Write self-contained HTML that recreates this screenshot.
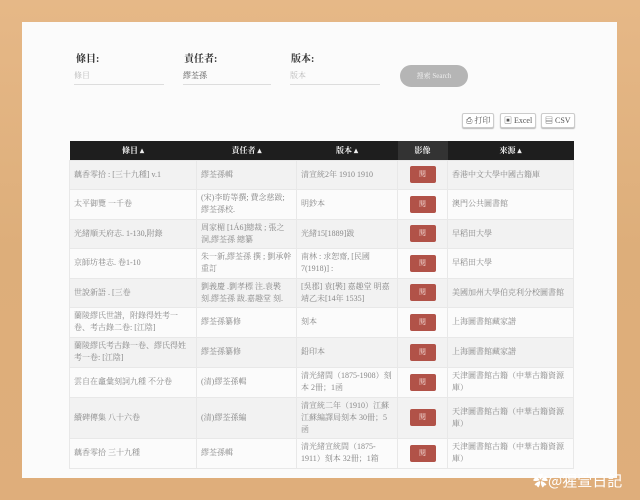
<!DOCTYPE html>
<html><head><meta charset="utf-8"><style>
*{margin:0;padding:0;box-sizing:border-box}
body{width:640px;height:500px;overflow:hidden;background:linear-gradient(180deg,#e6b887,#ddae7a 50%,#dfae7b);font-family:"Liberation Serif","Noto Serif CJK SC",serif;position:relative}
.paper{position:absolute;left:22px;top:22px;width:595px;height:456px;background:#fbfbfb}
.lbl{position:absolute;top:50px;font-size:10px;font-weight:bold;color:#333}
.inp{position:absolute;top:65px;height:20px;border-bottom:1px solid #ddd;font-size:8px;color:#bbb;padding-top:5px}
.btn{position:absolute;left:400px;top:65px;width:68px;height:22px;border-radius:11px;background:#b5b5b5;color:#eee;font-size:7px;text-align:center;line-height:22px}
.eb{position:absolute;top:113px;height:15px;border:1px solid #ccc;border-radius:2px;background:#fff;font-size:8px;color:#555;line-height:13px;padding:0 3px;box-shadow:0 1px 1px #bbb}
table{position:absolute;left:69px;top:141px;width:504px;border-collapse:collapse;font-size:8px;color:#888;table-layout:fixed}
th{background:#1e1e1e;color:#eee;height:19px;font-size:8px;font-weight:bold}
th.d{background:#333}
td{border:1px solid #e8e8e8;padding:2px 4px;line-height:12px;vertical-align:middle;overflow:hidden}
tr:nth-child(even) td{background:#f2f2f2}
tr td:nth-child(4){text-align:center}
.r{display:inline-block;width:26px;height:17px;background:#b15248;color:#f3d9d5;border-radius:2px;line-height:17px;font-size:7px}
.wm{position:absolute;left:533px;top:470px;color:#fff;font-size:15px;font-family:"Noto Sans CJK SC",sans-serif}
</style></head><body>
<div class="paper"></div>
<div class="lbl" style="left:76px">條目:</div>
<div class="lbl" style="left:184px">責任者:</div>
<div class="lbl" style="left:291px">版本:</div>
<div class="inp" style="left:74px;width:90px">條目</div>
<div class="inp" style="left:183px;width:88px;color:#555">繆荃孫</div>
<div class="inp" style="left:290px;width:90px">版本</div>
<div class="btn">搜索 Search</div>
<div class="eb" style="left:462px">⎙ 打印</div>
<div class="eb" style="left:500px">▣ Excel</div>
<div class="eb" style="left:541px">▤ CSV</div>
<table>
<colgroup><col style="width:127px"><col style="width:100px"><col style="width:101px"><col style="width:50px"><col style="width:126px"></colgroup>
<tr><th>條目 ▴</th><th>責任者 ▴</th><th>版本 ▴</th><th class="d">影像</th><th>來源 ▴</th></tr>
<tr style="height:29px"><td>藕香零拾 : [三十九種] v.1</td><td>繆荃孫輯</td><td>清宣統2年 1910 1910</td><td><span class="r">閱</span></td><td>香港中文大學中國古籍庫</td></tr>
<tr style="height:30px"><td>太平御覽 一千卷</td><td>(宋)李昉等撰; 費念慈跋; 繆荃孫校.</td><td>明鈔本</td><td><span class="r">閱</span></td><td>澳門公共圖書館</td></tr>
<tr style="height:29px"><td>光緒順天府志. 1-130,附錄</td><td>周家楣 [1Á6]總裁 ; 張之洞,繆荃孫 總纂</td><td>光緒15[1889]跋</td><td><span class="r">閱</span></td><td>早稻田大學</td></tr>
<tr style="height:30px"><td>京師坊巷志. 卷1-10</td><td>朱一新,繆荃孫 撰 ; 劉承幹重訂</td><td>南林 : 求恕齋, [民國7(1918)] :</td><td><span class="r">閱</span></td><td>早稻田大學</td></tr>
<tr style="height:29px"><td>世說新語 . [三卷</td><td>劉義慶 .劉孝標 注.袁褧 刻.繆荃孫 跋.嘉趣堂 刻.</td><td>[吳郡] 袁[褧] 嘉趣堂 明嘉靖乙未[14年 1535]</td><td><span class="r">閱</span></td><td>美國加州大學伯克利分校圖書館</td></tr>
<tr style="height:30px"><td>蘭陵繆氏世譜，附錄得姓考一卷、考古錄二卷: [江陰]</td><td>繆荃孫纂修</td><td>刻本</td><td><span class="r">閱</span></td><td>上海圖書館藏家譜</td></tr>
<tr style="height:30px"><td>蘭陵繆氏考古錄一卷、繆氏得姓考一卷: [江陰]</td><td>繆荃孫纂修</td><td>鉛印本</td><td><span class="r">閱</span></td><td>上海圖書館藏家譜</td></tr>
<tr style="height:30px"><td>雲自在龕彙刻詞九種 不分卷</td><td>(清)繆荃孫輯</td><td>清光緒間（1875-1908）刻本 2冊；1函</td><td><span class="r">閱</span></td><td>天津圖書館古籍（中華古籍資源庫）</td></tr>
<tr style="height:40px"><td>續碑傳集 八十六卷</td><td>(清)繆荃孫編</td><td>清宣統二年（1910）江蘇江蘇編譯局刻本 30冊；5函</td><td><span class="r">閱</span></td><td>天津圖書館古籍（中華古籍資源庫）</td></tr>
<tr style="height:30px"><td>藕香零拾 三十九種</td><td>繆荃孫輯</td><td>清光緒宣統間（1875-1911）刻本 32冊；1箱</td><td><span class="r">閱</span></td><td>天津圖書館古籍（中華古籍資源庫）</td></tr>
</table>
<div class="wm">✿@猩萱日記</div>
</body></html>
